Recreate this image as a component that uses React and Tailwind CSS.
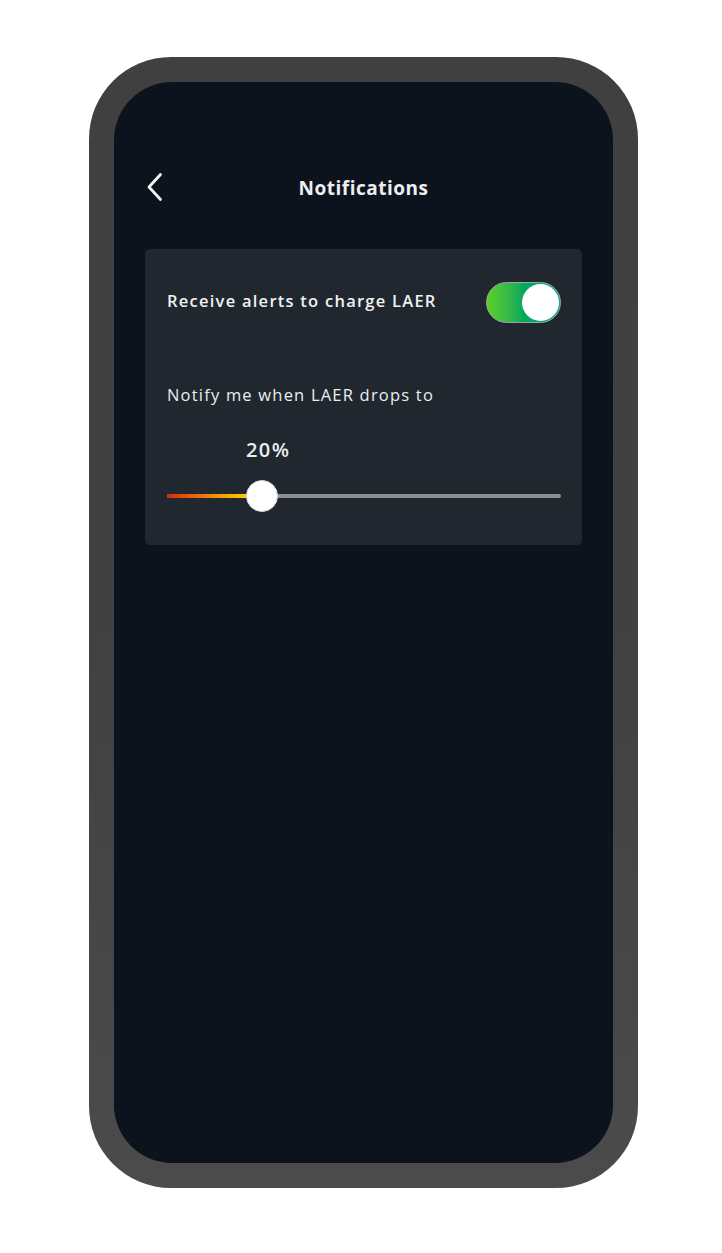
export default function App() {
  const pct = 20
  return (
    <div className="w-[722px] h-[1253px] bg-white pt-[57px] pl-[89px]" style={{ fontFamily: '"Open Sans", Inter, sans-serif' }}>
      {/* phone frame */}
      <div className="w-[549px] h-[1131px] rounded-[82px] bg-linear-to-b from-[#404040] via-[#414141] to-[#4b4b4b] p-[25px]">
        <div className="w-full h-full rounded-[58px] bg-[#0d131d] px-[31px] pt-[88px]">
          {/* header */}
          <div className="relative flex items-center justify-center h-9">
            <svg className="absolute left-[1px] top-[2px]" width="18" height="30" viewBox="0 0 18 30" fill="none">
              <path d="M14.5 2.5 3 15l11.5 12.5" stroke="#f4f4f4" strokeWidth="2.8" strokeLinecap="round" strokeLinejoin="round" />
            </svg>
            <h1 className="text-[19px] font-bold text-[#eceef0] tracking-[0.5px]">Notifications</h1>
          </div>

          {/* card */}
          <div className="mt-[43px] rounded-[5px] bg-[#21272f] pl-[22px] pr-[21px] pt-[33px] pb-[33px]">
            <div className="flex items-center justify-between">
              <span className="mb-[3px] text-[16.5px] font-semibold text-[#f0f1f2] tracking-[1.25px]">Receive alerts to charge LAER</span>
              <div className="w-[75px] h-[41px] rounded-full border border-[#9aa7a6] bg-linear-to-r from-[#5ad11a] via-[#00a85a] to-[#13a394] flex items-center justify-end pr-[1px]">
                <div className="w-[37px] h-[37px] rounded-full bg-white" />
              </div>
            </div>

            <p className="mt-[60px] text-[16.5px] text-[#eceef0] tracking-[1.2px]">Notify me when LAER drops to</p>

            <div className="mt-[29px] pl-[79px] text-[20px] font-semibold text-[#eceef0] leading-[26px] tracking-[1.4px]">{pct}%</div>

            <div className="relative mt-[17px] h-[32px] flex items-center">
              <div className="w-full h-[4px] rounded-full bg-[#8e8f93]" />
              <div
                className="absolute left-0 h-[4px] rounded-l-full bg-linear-to-r from-[#d4260b] via-[#f27d06] to-[#ffcc00]"
                style={{ width: `${(pct + 4.2) * 394 / 100 - 16}px` }}
              />
              <div className="absolute left-[79px] top-0 w-[32px] h-[32px] rounded-full bg-white border border-[#d8d8d8]" />
            </div>
          </div>
        </div>
      </div>
    </div>
  )
}
